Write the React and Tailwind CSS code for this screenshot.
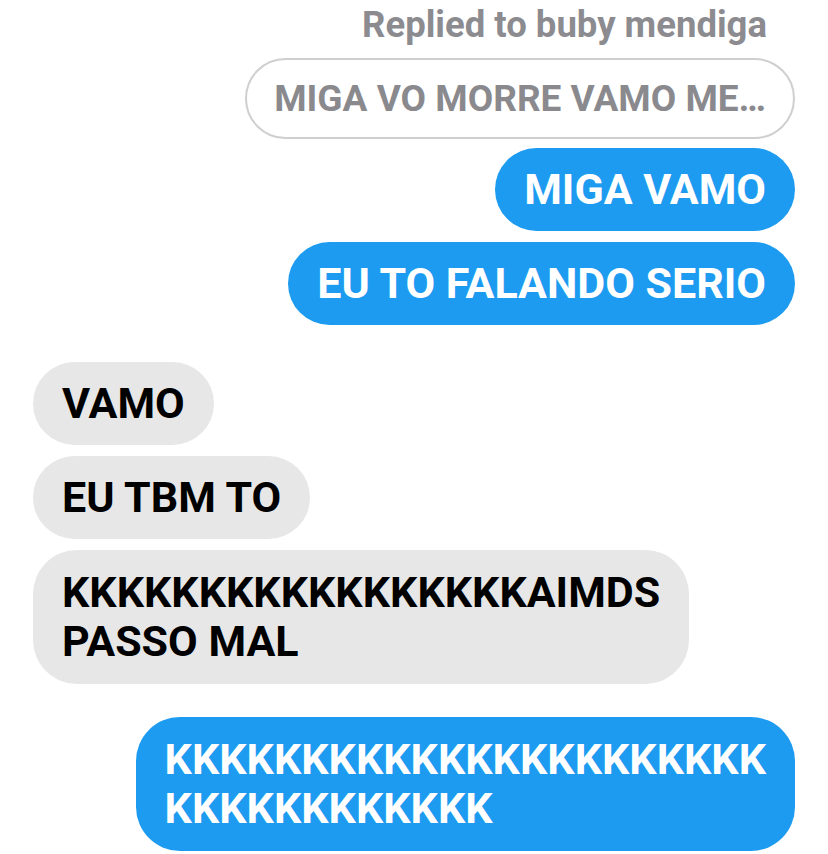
import React from 'react';

const font = { fontFamily: 'Roboto, "Liberation Sans", Arial, sans-serif' };

function Bubble({ mine, lines, className = '' }) {
  const multi = lines.length > 1;
  return (
    <div
      className={`${mine ? 'self-end bg-[#1d9bf0] text-white' : 'self-start bg-[#e7e7e8] text-black'} ${
        multi ? 'rounded-[44px] py-[18px]' : 'rounded-full py-[17px]'
      } px-[29px] text-[43px] leading-[49px] font-bold whitespace-nowrap ${className}`}
    >
      {lines.map((l, i) => (
        <div key={i}>{l}</div>
      ))}
    </div>
  );
}

export default function App() {
  return (
    <div className="w-[828px] h-[854px] bg-white overflow-hidden px-[33px] pt-[4px] flex flex-col" style={font}>
      {/* reply header */}
      <div className="self-end pr-[28px] text-[36.5px] leading-[42px] font-bold text-[#8b8b90]">
        Replied to buby mendiga
      </div>
      <div className="self-end mt-[12px] rounded-full border-2 border-[#cfcfd1] px-[27px] py-[14px] text-[37px] leading-[49px] font-bold text-[#8a8a8e] whitespace-nowrap">
        MIGA VO MORRE VAMO ME…
      </div>

      <Bubble mine lines={['MIGA VAMO']} className="mt-[9px]" />
      <Bubble mine lines={['EU TO FALANDO SERIO']} className="mt-[11px]" />

      <Bubble lines={['VAMO']} className="mt-[37px]" />
      <Bubble lines={['EU TBM TO']} className="mt-[11px]" />
      <Bubble lines={['KKKKKKKKKKKKKKKKKAIMDS', 'PASSO MAL']} className="mt-[11px]" />

      <Bubble mine lines={['KKKKKKKKKKKKKKKKKKKKKK', 'KKKKKKKKKKKK']} className="mt-[33px]" />
    </div>
  );
}
